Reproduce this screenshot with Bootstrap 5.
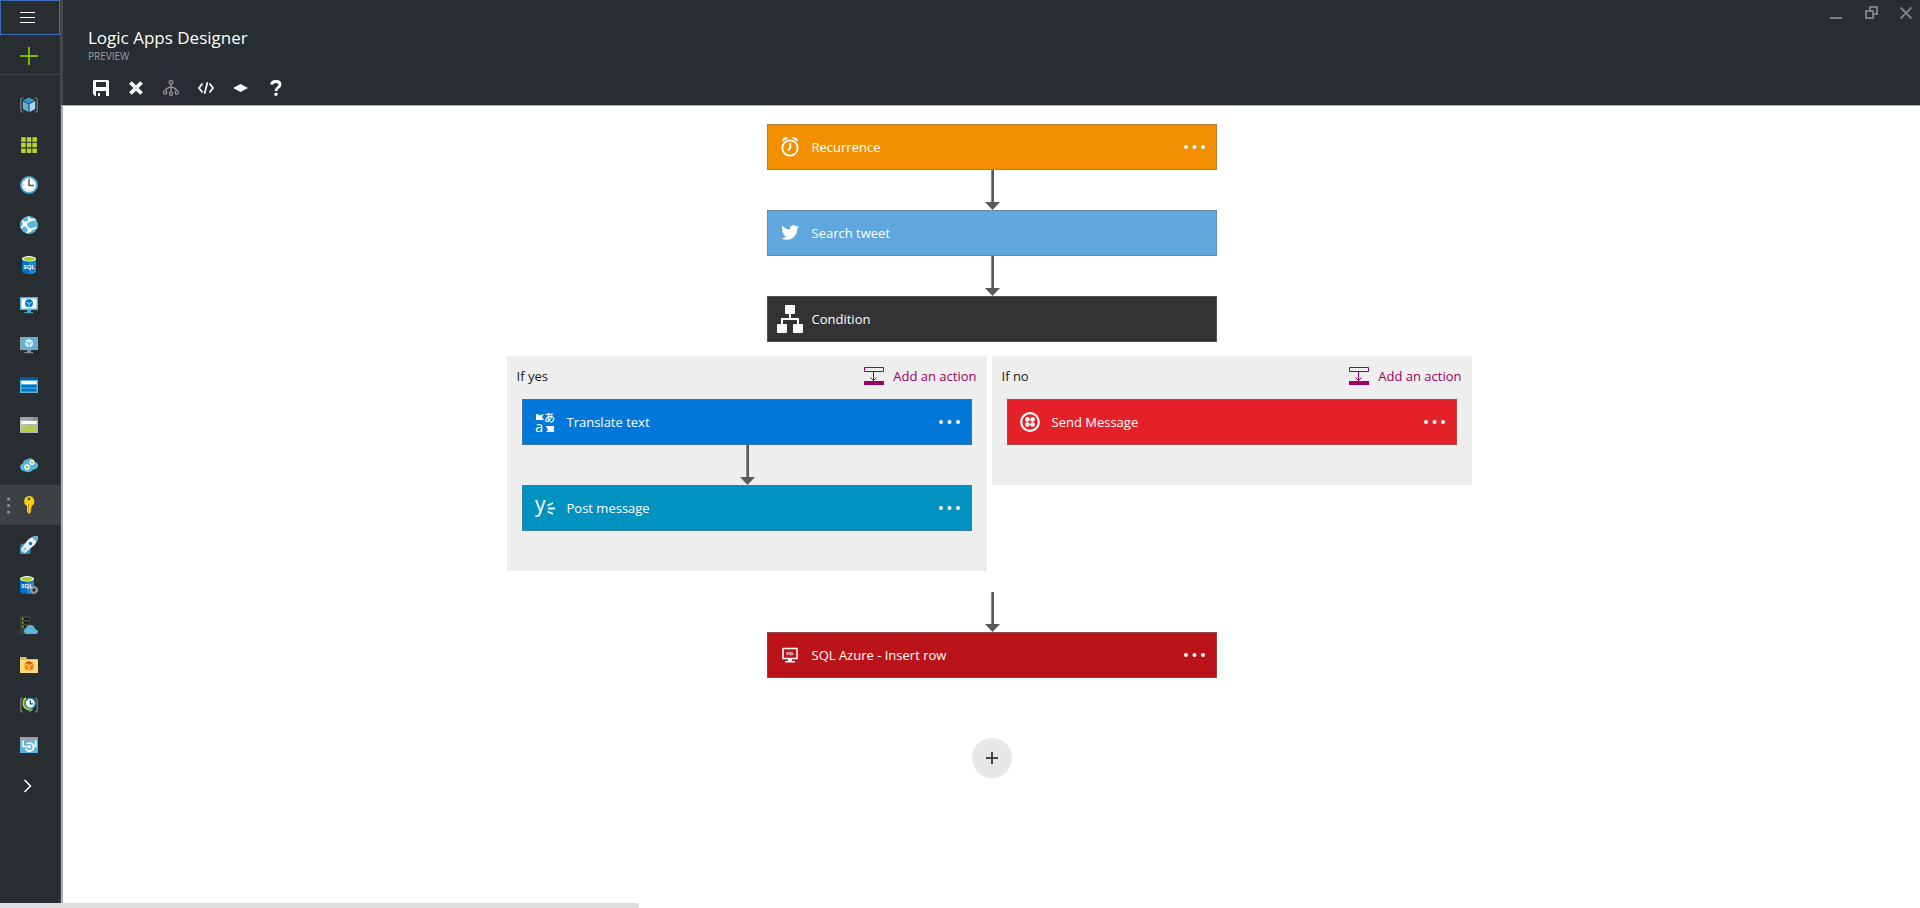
<!DOCTYPE html>
<html lang="en">
<head>
<meta charset="utf-8">
<meta name="viewport" content="width=device-width, initial-scale=1">
<title>Logic Apps Designer</title>
<link rel="stylesheet" href="https://cdn.jsdelivr.net/npm/bootstrap@5.3.0/dist/css/bootstrap.min.css">
<style>
  body { font-family: "Open Sans", "Noto Sans", sans-serif; font-size: 13px; line-height: 20px; color: #1a1a1a; background: #fff; }
  svg { display: block; flex: none; overflow: visible; }
  button { border: 0; background: none; padding: 0; color: inherit; }
  .side-menu { width: 61px; flex: none; background: #282d31; border-right: 1px solid #42474b; }
  .side-toggle { height: 35px; padding-left: 19px; border: 1px solid #3e6ab5; color: #fff; }
  .side-new { height: 40px; padding-left: 20px; padding-top: 2px; border-bottom: 1px solid #42474b; }
  .side-list { padding-top: 10px; }
  .side-link { height: 40px; padding-left: 20px; }
  .side-link.active { background: #3c4146; }
  .side-link .grip { left: 6px; top: 12px; }
  .blade-head { height: 105px; background: #282d31; border-left: 2px solid #42474b; color: #fff; }
  .blade-name { padding: 26px 25px 0; }
  .blade-title { font-size: 17px; line-height: 24px; font-weight: 400; }
  .blade-sub { font-size: 10px; line-height: 12px; color: #9a9da0; }
  .blade-tools { padding: 8px 20px 0; }
  .tool { width: 35px; height: 35px; }
  .tool.off { background: #2a2b33; }
  .win-tools { gap: 20px; padding: 4px 7px 0 0; }
  .canvas { border-left: 2px solid #acacac; border-top: 1px solid #acacac; padding-top: 18px; }
  .step { width: 450px; max-width: 100%; height: 46px; padding: 0 7px 0 8px; gap: 8px; color: #fff; border: 1px solid rgba(110,110,110,.5); }
  .step .more { width: 28px; height: 28px; }
  .s-time { background-color: #f39000; }
  .s-tweet { background-color: #5fa7dc; }
  .s-cond { background-color: #333; }
  .s-trans { background-color: #0078d9; }
  .s-post { background-color: #0092c0; }
  .s-send { background-color: #e42129; }
  .s-sql { background-color: #ba141a; }
  .branches { padding-top: 14px; padding-bottom: 21px; }
  .branch { width: 480px; max-width: 100%; margin-right: 5px; padding-bottom: 40px; background: #eee; }
  .branch-head { height: 43px; padding: 0 10px 4px; }
  .add-action { gap: 9px; color: #9b0062; }
  .add-step { width: 40px; height: 40px; margin-top: 60px; background: #e6e7e9; color: #444; }
  .load-bar { width: 639px; height: 5px; background: #dedede; border-radius: 0 3px 0 0; }
</style>
</head>
<body>
<svg width="0" height="0" class="position-absolute" aria-hidden="true">
  <defs>
    <symbol id="arrow" viewBox="0 0 16 40"><path d="M7 0h1v33H7z" fill="#8a8a8a"/><path d="M8 0h2v33H8zM1 32h15L8.500 40z" fill="#595959"/></symbol>
    <symbol id="dots" viewBox="0 0 28 28"><g fill="#fff"><circle cx="5" cy="14" r="2"/><circle cx="13.500" cy="14" r="2"/><circle cx="22" cy="14" r="2"/></g></symbol>
    <symbol id="insert" viewBox="0 0 20 18"><path d="M.5.5h19v4H.5zM9.500 5v9M6.500 10.500l3 3 3-3" fill="none" stroke="#9b0062"/><path d="M0 14h20v4H0z" fill="#9b0062"/></symbol>
  </defs>
</svg>

<div class="d-flex min-vh-100">
  <nav class="side-menu d-flex flex-column" aria-label="Services">
    <button class="side-toggle d-flex align-items-center" type="button" aria-label="Menu"><svg width="15" height="11" viewBox="0 0 15 11"><path d="M0 .5h15M0 5.500h15M0 10.500h15" stroke="#fff" stroke-width="1"/></svg></button>
    <button class="side-new d-flex align-items-center" type="button" aria-label="New"><svg width="18" height="18" viewBox="0 0 18 18"><path d="M0 9h18M9 0v18" stroke="#7fba00" stroke-width="2"/></svg></button>
    <div class="side-list">
    <a class="side-link d-flex align-items-center" href="#" aria-label="Resource groups"><svg width="18" height="18" viewBox="0 0 18 18"><path d="M3.500 2H2Q.8 2 .8 4v10q0 2 1.200 2h1.500M14.500 2H16q1.200 0 1.200 2v10q0 2-1.200 2h-1.500" fill="none" stroke="#7c8185" stroke-width="1.200"/><path d="M9 1.500l6 3-6 3-6-3z" fill="#3999c6"/><path d="M2.800 5.200L8.500 8v8l-5.700-3z" fill="#59b4d9"/><path d="M15.200 5.200L9.500 8v8l5.700-3z" fill="#a5d8ee"/></svg></a>
    <a class="side-link d-flex align-items-center" href="#" aria-label="All resources"><svg width="18" height="18" viewBox="1 1 16 16"><path d="M2 2h4v4H2zm5 0h4v4H7zm5 0h4v4h-4zM2 7h4v4H2zm5 0h4v4H7zm5 0h4v4h-4zM2 12h4v4H2zm5 0h4v4H7zm5 0h4v4h-4z" fill="#b8d432"/></svg></a>
    <a class="side-link d-flex align-items-center" href="#" aria-label="Recent"><svg width="18" height="18" viewBox="0 0 18 18"><circle cx="9" cy="9" r="8" fill="#fff" stroke="#46a5d0" stroke-width="2"/><path d="M9 3v6.500h5" fill="none" stroke="#555" stroke-width="1.500"/><path d="M4 9H3m2.500-4l-.7-.7m7.700.7l.7-.7M9 14v1m-3.500-2.500l-.7.7m7.700-.7l.7.7" stroke="#999"/></svg></a>
    <a class="side-link d-flex align-items-center" href="#" aria-label="App Services"><svg width="18" height="18" viewBox="0 0 18 18"><circle cx="9" cy="9" r="9" fill="#59b4d9"/><path d="M2 4.500l3 3.500 5-4 5.500-.5M5 8l4.500 6 7-2.500M9.500 14L7 17M5 8L1 12M10 4L8 1" fill="none" stroke="#fff" stroke-width="1.800"/><circle cx="5" cy="8" r="2.400" fill="#fff"/><circle cx="10" cy="4" r="1.800" fill="#fff"/><circle cx="9.500" cy="14" r="2.200" fill="#fff"/></svg></a>
    <a class="side-link d-flex align-items-center" href="#" aria-label="SQL databases"><svg width="18" height="18" viewBox="0 0 18 18"><path d="M2 3v12q0 3 7 3t7-3V3z" fill="#0072c6"/><path d="M9 5v13q7 0 7-3V3z" fill="#1a86d4"/><ellipse cx="9" cy="2.800" rx="7" ry="2.700" fill="#fff"/><ellipse cx="9" cy="2.900" rx="5.500" ry="1.800" fill="#a4cf0c"/><text x="9" y="13" text-anchor="middle" font-size="6" font-weight="700" fill="#fff">SQL</text></svg></a>
    <a class="side-link d-flex align-items-center" href="#" aria-label="Virtual machines"><svg width="18" height="18" viewBox="0 0 18 18"><path d="M0 1h18v13H0z" fill="#59b4d9"/><path d="M1.500 2.500h15v10h-15z" fill="#fff"/><path d="M7 14h4v2h2v1.200H4.500V16H7z" fill="#3fa3cd"/><circle cx="9" cy="7.300" r="4" fill="#0072c6"/><path d="M5.500 6L9 7.500 12.500 6M9 7.500V11" fill="none" stroke="#a5d8ee"/></svg></a>
    <a class="side-link d-flex align-items-center" href="#" aria-label="Virtual machines (classic)"><svg width="18" height="18" viewBox="0 0 18 18"><path d="M0 1h18v13H0z" fill="#a0a1a2"/><path d="M1.200 2.200h15.600v10.600H1.200z" fill="#59b4d9"/><path d="M7 14h4v2h2v1.200H4.500V16H7z" fill="#8a8c8e"/><circle cx="9" cy="7.300" r="4" fill="#d5eef8"/><path d="M5.500 6L9 7.500 12.500 6M9 7.500V11" fill="none" stroke="#59b4d9"/></svg></a>
    <a class="side-link d-flex align-items-center" href="#" aria-label="Cloud services"><svg width="18" height="18" viewBox="0 0 18 18"><path d="M0 1h18v16H0z" fill="#59b4d9"/><path d="M0 1h18v3H0z" fill="#005ba1"/><path d="M1.500 5h15v3h-15z" fill="#fff"/><path d="M1.500 9h15v2.500h-15zm0 3.500h15V15.500h-15z" fill="#0072c6"/></svg></a>
    <a class="side-link d-flex align-items-center" href="#" aria-label="Cloud services (classic)"><svg width="18" height="18" viewBox="0 0 18 18"><path d="M0 1h18v16H0z" fill="#b0b1b2"/><path d="M0 1h18v3.500H0z" fill="#8a8c8e"/><path d="M1.500 5h15v3h-15z" fill="#fff"/><path d="M1.500 9h15v2.500h-15zm0 3.500h15V15.500h-15z" fill="#b8d432"/><path d="M0 1h14L0 15z" fill="#fff" opacity=".2"/></svg></a>
    <a class="side-link d-flex align-items-center" href="#" aria-label="Logic apps"><svg width="18" height="18" viewBox="0 0 18 18"><path d="M4 15a4 4 0 0 1-1-7.800A4 4 0 0 1 7 3.500a5 5 0 0 1 8 2.500 3.600 3.600 0 0 1 .5 7Q14 13 12 14.500 10 17 7 16q-1.500 0-3-1z" fill="#59b4d9"/><circle cx="7" cy="11" r="2" fill="#7fba00" stroke="#fff" stroke-width="1.400"/><circle cx="12" cy="6.500" r="1.800" fill="#7fba00" stroke="#fff" stroke-width="1.400"/></svg></a>
    <a class="side-link active d-flex align-items-center position-relative" href="#" aria-label="Subscriptions"><svg class="grip position-absolute" width="5" height="17" viewBox="0 0 5 17"><g fill="#8f9396"><circle cx="2.500" cy="2" r="1.600"/><circle cx="2.500" cy="8.500" r="1.600"/><circle cx="2.500" cy="15" r="1.600"/></g></svg><svg width="18" height="18" viewBox="0 0 18 18"><path d="M9 0a5.500 5.500 0 0 1 2.500 10.300V12l-1 1 1 1-1 1 .5 1-2 2-2-2v-5.700A5.500 5.500 0 0 1 9 0z" fill="#fcd116"/><circle cx="9" cy="3" r="1.400" fill="#5a4a10"/><path d="M8.500 8v9" stroke="#d6a300"/></svg></a>
    <a class="side-link d-flex align-items-center" href="#" aria-label="Application Insights"><svg width="18" height="18" viewBox="0 0 18 18"><path d="M1 8l6-1 4 5-1 6H0v-6z" fill="#2d93c8"/><path d="M18 0q-7 0-11 5l-6 8 1 3 3 1 7-6q6-4 6-11z" fill="#e9eef2"/><path d="M18 0q-3 0-6 1.500L16.500 6Q18 3 18 0z" fill="#59b4d9"/><path d="M2 16l3-5 2 2z" fill="#b4c0c8"/><circle cx="10.500" cy="7.500" r="1.700" fill="#0072c6"/></svg></a>
    <a class="side-link d-flex align-items-center" href="#" aria-label="SQL servers"><svg width="18" height="18" viewBox="0 0 18 18"><path d="M0 3v12q0 3 7 3t7-3V3z" fill="#0072c6"/><path d="M7 5v13q7 0 7-3V3z" fill="#1a86d4"/><ellipse cx="7" cy="2.800" rx="7" ry="2.700" fill="#fff"/><ellipse cx="7" cy="2.900" rx="5.500" ry="1.800" fill="#a4cf0c"/><text x="7" y="12" text-anchor="middle" font-size="6" font-weight="700" fill="#fff">SQL</text><circle cx="14" cy="14" r="2.500" fill="#282d31" stroke="#a0a1a2" stroke-width="1.500"/><circle cx="14" cy="14" r="3.700" fill="none" stroke="#a0a1a2" stroke-width="1.200" stroke-dasharray="1.500 1.400"/></svg></a>
    <a class="side-link d-flex align-items-center" href="#" aria-label="StorSimple"><svg width="18" height="18" viewBox="0 0 18 18"><path d="M0 0h10v18H0z" fill="#3e3e3e"/><path d="M2 2h7v1.500H2zm0 4h7v1.500H2zm0 4h5v1.500H2z" fill="#111"/><path d="M2 2h1.500v1.500H2zm0 4h1.500v1.500H2zm0 4h1.500v1.500H2z" fill="#b8d432"/><path d="M6 18a3 3 0 0 1-.5-5.500Q7 9 10.500 9q3.500 0 4.500 4 3 .5 3 3 0 2-2 2z" fill="#59b4d9"/></svg></a>
    <a class="side-link d-flex align-items-center" href="#" aria-label="Packages"><svg width="18" height="18" viewBox="0 0 18 18"><path d="M0 1h6l1 2h11v14H0z" fill="#e5bd5c"/><path d="M0 4h18v13H0z" fill="#fbd983"/><path d="M9 5l4.500 2L9 9 4.500 7z" fill="#dd5900"/><path d="M4.500 8l4 1.800V15l-4-2z" fill="#ff8c00"/><path d="M13.500 8l-4 1.800V15l4-2z" fill="#f07a20"/></svg></a>
    <a class="side-link d-flex align-items-center" href="#" aria-label="Schedulers"><svg width="18" height="18" viewBox="0 0 18 18"><path d="M3 2Q.8 2 .8 4v10q0 2 2.200 2M15 2q2.200 0 2.200 2v10q0 2-2.200 2" fill="none" stroke="#7c8185" stroke-width="1.200"/><path d="M6 2Q3 4 3.500 8.500 4.500 13 10 13.500" fill="none" stroke="#b8d432" stroke-width="2"/><path d="M9.500 10.500l3.500 3-3.500 3z" fill="#7fba00"/><circle cx="10.300" cy="7.300" r="4.900" fill="#fff" stroke="#3999c6" stroke-width="1.400"/><path d="M10.300 4.200v3.600H13" fill="none" stroke="#333" stroke-width="1.200"/></svg></a>
    <a class="side-link d-flex align-items-center" href="#" aria-label="Automation"><svg width="18" height="18" viewBox="0 0 18 18"><path d="M0 1h18v16H0z" fill="#59b4d9"/><path d="M0 1h18v3.500H0z" fill="#a0a1a2"/><path d="M3 4.500v6h4.500M15.500 4.500v6h-2.800M6.500 7.800Q8 7 9.500 7a4 4 0 1 1-3.800 5.500" fill="none" stroke="#fff" stroke-width="1.700"/><circle cx="9.300" cy="10.800" r="1.700" fill="#fff"/></svg></a>
    <a class="side-link d-flex align-items-center" href="#" aria-label="Browse all"><svg width="18" height="14" viewBox="0 0 18 14"><path d="M4.500 2l6 6-6 6" fill="none" stroke="#fff" stroke-width="1.500"/></svg></a>
    </div>
  </nav>

  <main class="flex-grow-1 d-flex flex-column">
    <header class="blade-head d-flex justify-content-between">
      <div>
        <div class="blade-name">
          <h1 class="blade-title mb-0">Logic Apps Designer</h1>
          <div class="blade-sub">PREVIEW</div>
        </div>
        <div class="blade-tools d-flex" role="toolbar" aria-label="Designer">
          <button class="tool d-flex align-items-center justify-content-center" type="button" aria-label="Save"><svg width="16" height="16" viewBox="0 0 16 16"><path fill-rule="evenodd" d="M1 0h14l1 1v15H2l-2-2V1zm2 2v5h10V2zm0 9v5h2v-3h2v3h6v-5z" fill="#fff"/></svg></button>
          <button class="tool d-flex align-items-center justify-content-center" type="button" aria-label="Discard"><svg width="14" height="14" viewBox="0 0 14 14"><path d="M1.500 1.500l11 11M12.500 1.500l-11 11" stroke="#fff" stroke-width="3.800"/></svg></button>
          <button class="tool off d-flex align-items-center justify-content-center" type="button" aria-label="Designer view" disabled><svg width="16" height="16" viewBox="0 0 16 16"><g fill="none" stroke="#8f9194" stroke-width="1.400"><circle cx="8" cy="2.300" r="1.800"/><circle cx="2.200" cy="12.500" r="1.600"/><circle cx="8" cy="13.700" r="1.600"/><circle cx="13.800" cy="12.500" r="1.600"/><path d="M8 4v8M2.500 11q0-3 5.500-4 5.500 1 5.500 4"/></g></svg></button>
          <button class="tool d-flex align-items-center justify-content-center" type="button" aria-label="Code view"><svg width="16" height="12" viewBox="0 0 16 12"><path d="M4.500 1.500L1 6l3.500 4.500M11.500 1.500L15 6l-3.500 4.500M9.500.3l-3 11.400" fill="none" stroke="#fff" stroke-width="1.700"/></svg></button>
          <button class="tool d-flex align-items-center justify-content-center" type="button" aria-label="Templates"><svg width="15" height="8" viewBox="0 0 15 8"><path d="M7.500 0L15 4 7.500 8 0 4z" fill="#fff"/></svg></button>
          <button class="tool d-flex align-items-center justify-content-center" type="button" aria-label="Help"><svg width="12" height="16" viewBox="0 0 12 16"><path d="M1.600 4.500Q2 1.500 6 1.500t4 3q0 2-2.200 3.300Q6 9 6 11" fill="none" stroke="#fff" stroke-width="2.800"/><circle cx="6" cy="14.200" r="1.700" fill="#fff"/></svg></button>
        </div>
      </div>
      <div class="win-tools d-flex align-items-start">
        <button type="button" aria-label="Minimize"><svg width="16" height="18" viewBox="0 0 16 18"><path d="M1 13h12v2H1z" fill="#7b7f82"/></svg></button>
        <button type="button" aria-label="Restore"><svg width="14" height="18" viewBox="0 0 14 18"><path d="M1 7h7v7H1zM5 7V3h7v7H8" fill="none" stroke="#7b7f82" stroke-width="2"/></svg></button>
        <button type="button" aria-label="Close"><svg width="14" height="18" viewBox="0 0 14 18"><path d="M1.500 3.500l11 11M12.500 3.500l-11 11" fill="none" stroke="#7b7f82" stroke-width="2"/></svg></button>
      </div>
    </header>

    <section class="canvas flex-grow-1 d-flex flex-column align-items-center" aria-label="Workflow">
      <div class="step s-time d-flex align-items-center">
        <svg width="28" height="28" viewBox="0 0 28 28"><g fill="none" stroke="#fff" stroke-width="1.800"><circle cx="14" cy="15" r="7.700"/><path d="M14.300 10v5l-2.500 2.500M6.500 8Q8 5 11.500 5M21.500 8Q20 5 16.500 5"/></g></svg>
        <span>Recurrence</span><button class="more ms-auto" type="button" aria-label="More"><svg width="28" height="28"><use href="#dots"/></svg></button>
      </div>
      <svg width="16" height="40"><use href="#arrow"/></svg>
      <div class="step s-tweet d-flex align-items-center">
        <svg width="28" height="28" viewBox="0 0 28 28"><path transform="translate(5 5.500)" d="M18 2.500q-1 .4-2 .5 1.200-.8 1.600-2-1.200.6-2.300.9A3.700 3.700 0 0 0 8.900 5Q4.500 5 1.300 1.300.3 4.500 2.400 6.200 1.500 6.200.8 5.800q.2 3 3 3.700-.8.200-1.700 0 .8 2.300 3.400 2.600Q3 14 0 13.700q9.500 4.500 14.700-3.500Q16.300 7.500 16.200 4.400 17.300 3.600 18 2.500z" fill="#fff"/></svg>
        <span>Search tweet</span>
      </div>
      <svg width="16" height="40"><use href="#arrow"/></svg>
      <div class="step s-cond d-flex align-items-center">
        <svg width="28" height="28" viewBox="0 0 28 28"><rect x="9" y="0" width="10" height="9" rx="1" fill="#fff"/><rect x="1" y="19" width="10" height="9" rx="1" fill="#fff"/><rect x="17" y="19" width="10" height="9" rx="1" fill="#fff"/><path d="M14 8v6M6 20v-6h16v6" fill="none" stroke="#fff" stroke-width="2"/></svg>
        <span>Condition</span>
      </div>

      <div class="branches d-flex align-items-start">
        <div class="branch">
          <div class="branch-head d-flex align-items-center justify-content-between"><span>If yes</span>
            <button class="add-action d-flex align-items-center" type="button"><svg width="20" height="18"><use href="#insert"/></svg>Add an action</button></div>
          <div class="d-flex flex-column align-items-center">
            <div class="step s-trans d-flex align-items-center">
              <svg width="28" height="28" viewBox="0 0 28 28"><path d="M5 6h2l1 1.500L13 6l-2 3 2 3H5zM23 24h-8l2-2-2-4h8z" fill="#fff"/><text x="4" y="24" font-size="15" fill="#fff">a</text><text x="13" y="14" font-size="11" font-weight="500" font-family="Noto Sans CJK JP, sans-serif" fill="#fff">あ</text></svg>
              <span>Translate text</span><button class="more ms-auto" type="button" aria-label="More"><svg width="28" height="28"><use href="#dots"/></svg></button>
            </div>
            <svg width="16" height="40"><use href="#arrow"/></svg>
            <div class="step s-post d-flex align-items-center">
              <svg width="28" height="28" viewBox="0 0 28 28"><text x="4" y="18" font-size="21" font-weight="500" fill="#fff">y</text><path d="M16.500 11.500L22 9M17 14.500h7M16.500 17.500L22 20" stroke="#fff" stroke-width="1.800"/></svg>
              <span>Post message</span><button class="more ms-auto" type="button" aria-label="More"><svg width="28" height="28"><use href="#dots"/></svg></button>
            </div>
          </div>
        </div>
        <div class="branch">
          <div class="branch-head d-flex align-items-center justify-content-between"><span>If no</span>
            <button class="add-action d-flex align-items-center" type="button"><svg width="20" height="18"><use href="#insert"/></svg>Add an action</button></div>
          <div class="d-flex flex-column align-items-center">
            <div class="step s-send d-flex align-items-center">
              <svg width="28" height="28" viewBox="0 0 28 28"><circle cx="14" cy="14" r="8.800" fill="none" stroke="#fff" stroke-width="2.200"/><g fill="#fff"><circle cx="11.400" cy="11.400" r="2.300"/><circle cx="16.600" cy="11.400" r="2.300"/><circle cx="11.400" cy="16.600" r="2.300"/><circle cx="16.600" cy="16.600" r="2.300"/></g></svg>
              <span>Send Message</span><button class="more ms-auto" type="button" aria-label="More"><svg width="28" height="28"><use href="#dots"/></svg></button>
            </div>
          </div>
        </div>
      </div>

      <svg width="16" height="40"><use href="#arrow"/></svg>
      <div class="step s-sql d-flex align-items-center">
        <svg width="28" height="28" viewBox="0 0 28 28"><path d="M7 7.500h14v10H7z" fill="none" stroke="#fff" stroke-width="1.500"/><path d="M12 18h4v2h3v1.500H9V20h3z" fill="#fff"/><text x="14" y="14" text-anchor="middle" font-size="4" font-weight="700" fill="#fff">SQL</text></svg>
        <span>SQL Azure - Insert row</span><button class="more ms-auto" type="button" aria-label="More"><svg width="28" height="28"><use href="#dots"/></svg></button>
      </div>
      <button class="add-step rounded-circle d-flex align-items-center justify-content-center" type="button" aria-label="Add step"><svg width="12" height="12" viewBox="0 0 12 12"><path d="M0 6h12M6 0v12" stroke="#444" stroke-width="2"/></svg></button>
    </section>
  </main>
</div>
<div class="load-bar position-fixed bottom-0 start-0"></div>
<script src="https://cdn.jsdelivr.net/npm/bootstrap@5.3.0/dist/js/bootstrap.bundle.min.js"></script>
</body>
</html>
